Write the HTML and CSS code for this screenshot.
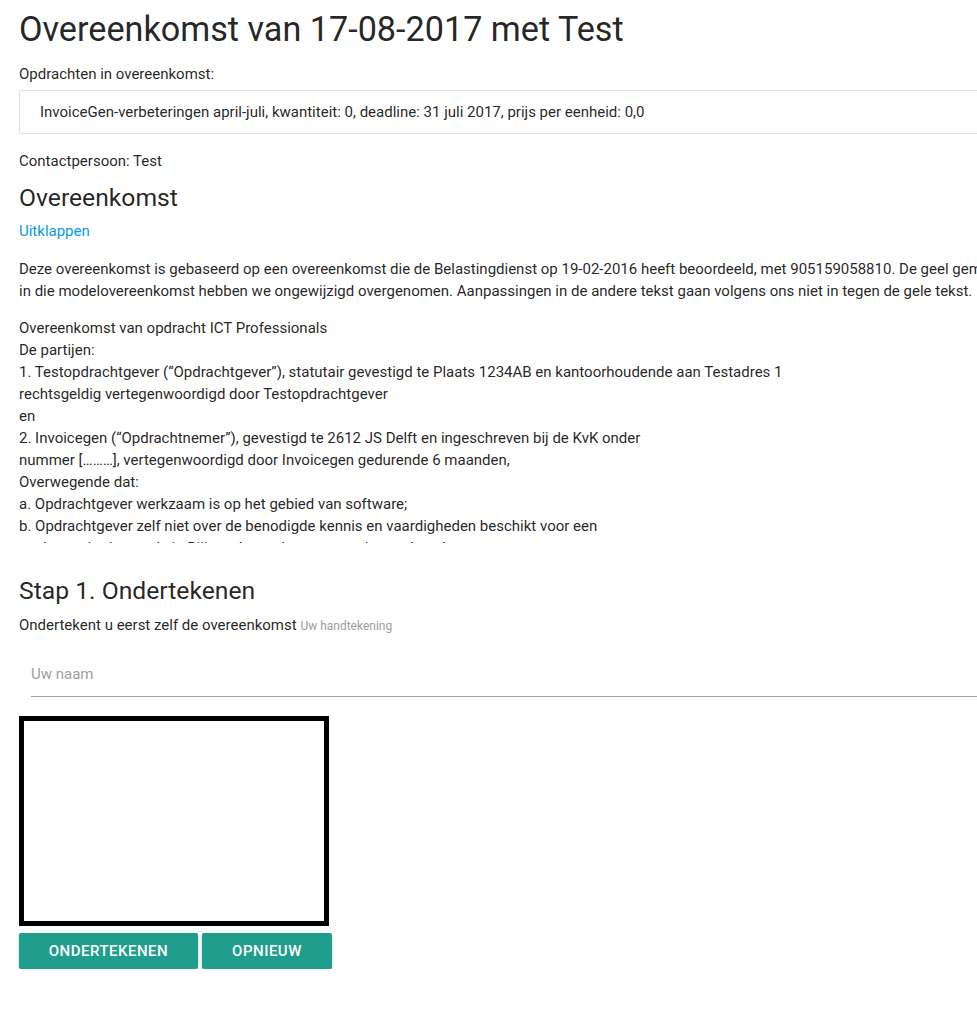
FILE: index.html
```html
<!DOCTYPE html>
<html lang="nl">
<head>
<meta charset="utf-8">
<title>Overeenkomst</title>
<link rel="stylesheet" href="styles.css">
</head>
<body>
<div class="page">
  <h1 class="title">Overeenkomst van 17-08-2017 met Test</h1>
  <p class="text gap-title">Opdrachten in overeenkomst:</p>
  <ul class="collection">
    <li class="collection-item">InvoiceGen-verbeteringen april-juli, kwantiteit: 0, deadline: 31 juli 2017, prijs per eenheid: 0,0</li>
  </ul>
  <p class="text contact">Contactpersoon: Test</p>
  <h2 class="subtitle sub-first">Overeenkomst</h2>
  <a class="link" href="#">Uitklappen</a>
  <p class="text intro">Deze overeenkomst is gebaseerd op een overeenkomst die de Belastingdienst op 19-02-2016 heeft beoordeeld, met 905159058810. De geel gemarkeerde tekst<br>in die modelovereenkomst hebben we ongewijzigd overgenomen. Aanpassingen in de andere tekst gaan volgens ons niet in tegen de gele tekst.</p>
  <div class="contract">
    Overeenkomst van opdracht ICT Professionals<br>
    De partijen:<br>
    1. Testopdrachtgever (“Opdrachtgever”), statutair gevestigd te Plaats 1234AB en kantoorhoudende aan Testadres 1<br>
    rechtsgeldig vertegenwoordigd door Testopdrachtgever<br>
    en<br>
    2. Invoicegen (“Opdrachtnemer”), gevestigd te 2612 JS Delft en ingeschreven bij de KvK onder<br>
    nummer [………], vertegenwoordigd door Invoicegen gedurende 6 maanden,<br>
    Overwegende dat:<br>
    a. Opdrachtgever werkzaam is op het gebied van software;<br>
    b. Opdrachtgever zelf niet over de benodigde kennis en vaardigheden beschikt voor een<br>
    werkzaamheden zoals in Bijlage A van deze overeenkomst beschreven;<br>
    c. Opdrachtnemer deze kennis en vaardigheden wel bezit;
  </div>
  <h2 class="subtitle sub-step">Stap 1. Ondertekenen</h2>
  <p class="text sign-intro">Ondertekent u eerst zelf de overeenkomst <span class="hint">Uw handtekening</span></p>
  <div class="input-field">
    <input class="name-input" type="text" placeholder="Uw naam">
  </div>
  <div class="canvas"></div>
  <div class="actions">
    <button class="btn btn-sign">Ondertekenen</button>
    <button class="btn btn-reset">Opnieuw</button>
  </div>
</div>
</body>
</html>
```

FILE: styles.css
```css
html, body {
  margin: 0;
  padding: 0;
  background: #fff;
  overflow: hidden;
}

body {
  font-family: Roboto, "Noto Sans", sans-serif;
  font-size: 15px;
  line-height: 22px;
  color: rgba(0, 0, 0, 0.87);
}

.page {
  width: 1400px;
  padding: 2px 0 0 19px;
}

.title {
  margin: 0;
  font-size: 34.2px;
  font-weight: 400;
  line-height: 54px;
}

.text {
  margin: 0;
}

.gap-title {
  margin-top: 7px;
}

.collection {
  list-style: none;
  margin: 5px 0 0;
  padding: 0;
  border: 1px solid #e0e0e0;
  border-radius: 2px;
  width: 1200px;
}

.collection-item {
  padding: 10px 20px;
}

.contact {
  margin-top: 16px;
}

.subtitle {
  margin: 0;
  font-size: 24.7px;
  font-weight: 400;
  line-height: 30px;
}

.sub-first {
  margin-top: 11px;
}

.link {
  display: block;
  margin-top: 7px;
  color: #039be5;
  text-decoration: none;
}

.intro {
  margin-top: 16px;
  white-space: nowrap;
}

.contract {
  margin-top: 15px;
  height: 226px;
  overflow: hidden;
  white-space: nowrap;
}

.sub-step {
  margin-top: 33px;
}

.sign-intro {
  margin-top: 8px;
}

.hint {
  font-size: 12px;
  color: #9e9e9e;
}

.input-field {
  margin: 14px 0 0 12px;
}

.name-input {
  display: block;
  box-sizing: content-box;
  width: 1300px;
  height: 45px;
  padding: 0;
  margin: 0;
  border: none;
  border-bottom: 1px solid #9e9e9e;
  outline: none;
  background: transparent;
  font-family: Roboto, "Noto Sans", sans-serif;
  font-size: 15px;
  color: rgba(0, 0, 0, 0.87);
}

.name-input::placeholder {
  color: #9e9e9e;
}

.canvas {
  margin-top: 19px;
  width: 300px;
  height: 200px;
  border: 5px solid #000;
}

.actions {
  display: flex;
  gap: 4px;
  margin-top: 7px;
}

.btn {
  height: 36px;
  padding: 0 20px;
  border: none;
  border-radius: 2px;
  background: #1f9e8e;
  color: #fff;
  font-family: Roboto, "Noto Sans", sans-serif;
  font-size: 15px;
  font-weight: 500;
  letter-spacing: 0.5px;
  text-transform: uppercase;
  box-shadow: 0 2px 2px 0 rgba(0, 0, 0, 0.14), 0 1px 5px 0 rgba(0, 0, 0, 0.12), 0 3px 1px -2px rgba(0, 0, 0, 0.2);
}

.btn-sign {
  width: 179px;
}

.btn-reset {
  width: 130px;
}
```
